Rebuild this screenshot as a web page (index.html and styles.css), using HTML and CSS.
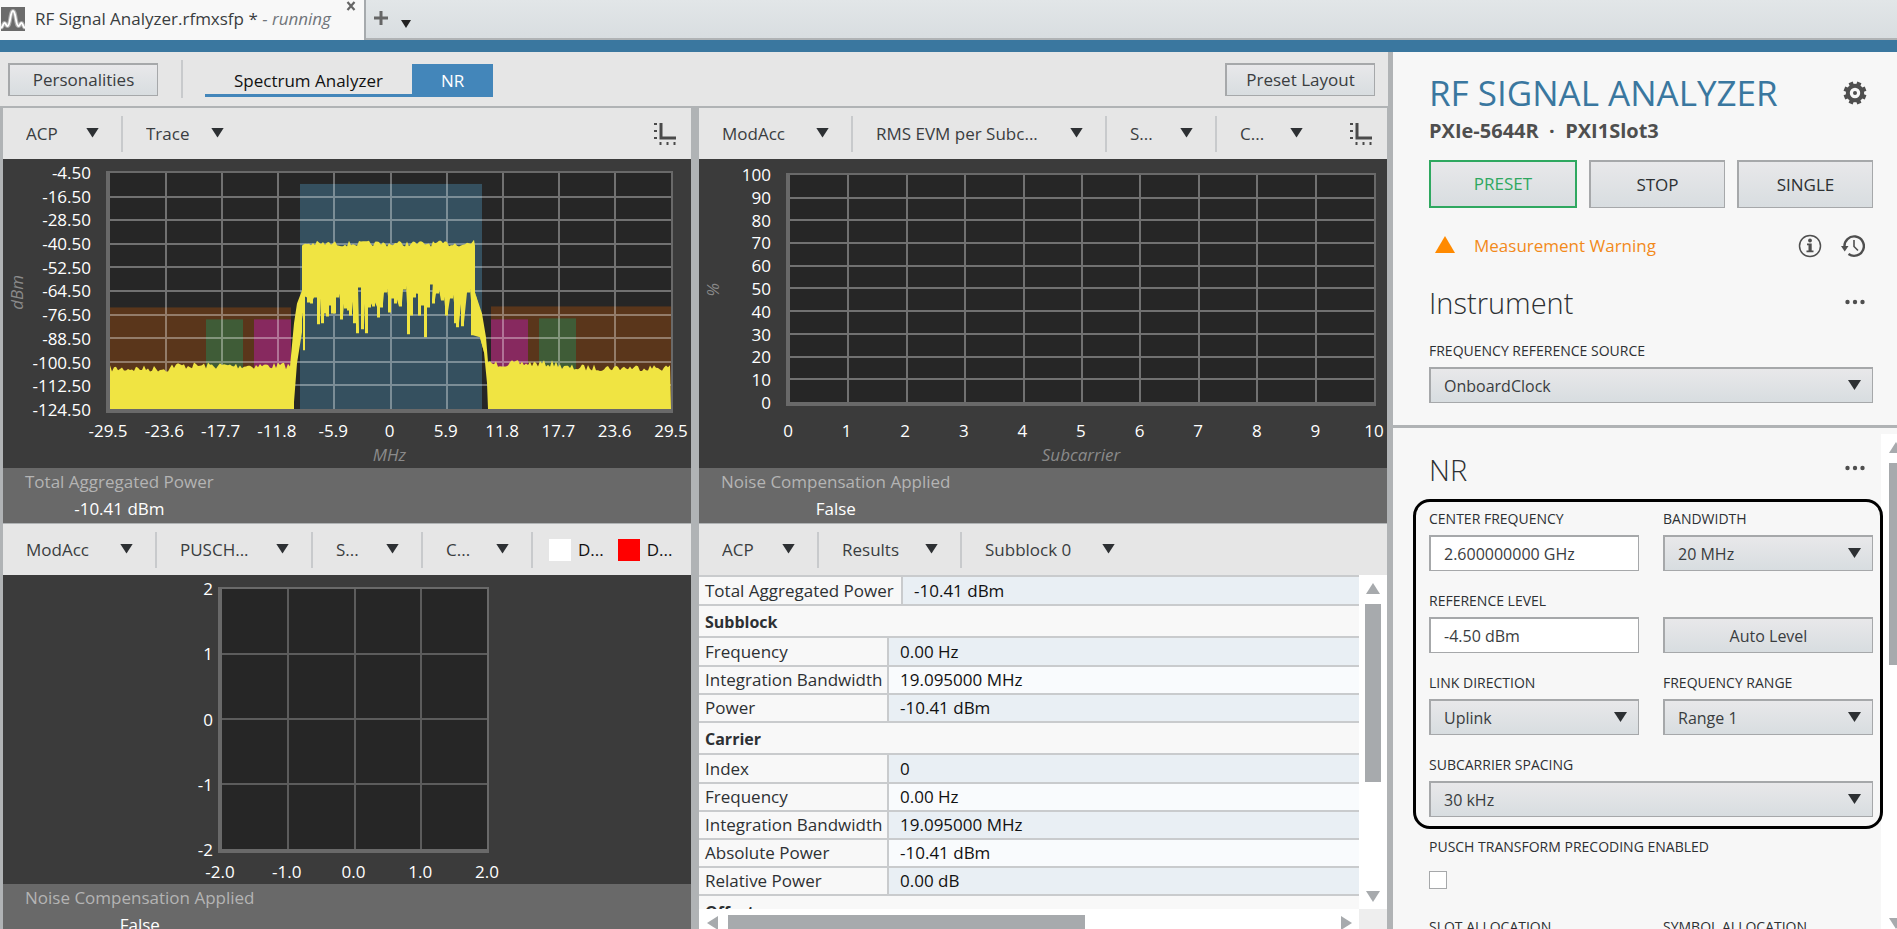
FILE: index.html
```html
<!DOCTYPE html>
<html lang="en">
<head>
<meta charset="utf-8">
<title>RF Signal Analyzer</title>
<link rel="stylesheet" href="styles.css">
</head>
<body>
<div class="app">
  <header class="tabbar">
    <div class="doc-tab">
      <svg class="doc-icon" viewBox="0 0 24 24" aria-hidden="true"><rect width="24" height="24" fill="#6b6b6b"/><path d="M0 21c2-1 2-5 3.500-5s1.500 3 3 3c3 0 2.500-15 5.500-15s2.500 15 5.500 15c1.500 0 1.500-3 3-3s1.500 4 3.500 5" fill="none" stroke="#aaa" stroke-width="4"/><path d="M0 21c2-1 2-5 3.500-5s1.500 3 3 3c3 0 2.500-15 5.500-15s2.500 15 5.500 15c1.500 0 1.500-3 3-3s1.500 4 3.500 5" fill="none" stroke="#fff" stroke-width="1.800"/></svg>
      <span class="doc-name">RF Signal Analyzer.rfmxsfp * <em>- running</em></span>
      <button class="doc-close" aria-label="Close tab"><svg viewBox="0 0 10 10"><path d="M1.500 1l7 8M8.500 1l-7 8" stroke="#666" stroke-width="2.200"/></svg></button>
    </div>
    <button class="tab-tool" aria-label="New tab"><svg width="16" height="16" viewBox="0 0 16 16"><path d="M8 1v14M1 8h14" stroke="#666" stroke-width="3"/></svg></button>
    <button class="tab-tool low" aria-label="Tab list"><svg width="10" height="8" viewBox="0 0 10 8"><path d="M0 0h10L5 8z" fill="#222"/></svg></button>
  </header>

  <div class="workspace">
    <main class="main">
      <div class="toolbar">
        <button class="btn btn-tool">Personalities</button>
        <span class="rule"></span>
        <nav class="modes">
          <button class="mode">Spectrum Analyzer</button>
          <button class="mode active">NR</button>
        </nav>
        <button class="btn btn-tool push">Preset Layout</button>
      </div>

      <div class="panels">
        <section class="panel">
          <div class="panel-head">
            <span class="pick w-acp"><select aria-label="Measurement"><option>ACP</option></select></span>
            <span class="pick w-trace"><select aria-label="View"><option>Trace</option></select></span>
            <button class="axes push" aria-label="Axes"><svg viewBox="0 0 24 24"><path d="M8 1v15h15" fill="none" stroke="#4a4a4a" stroke-width="3"/><path d="M1 2h3M1 9h3M1 16h3M7.500 20v3M14.500 20v3M21.500 20v3" stroke="#4a4a4a" stroke-width="2"/></svg></button>
          </div>
          <div class="chart chart-acp">
            <div class="ytitle">dBm</div>
            <div class="ylabels"><span>-4.50</span><span>-16.50</span><span>-28.50</span><span>-40.50</span><span>-52.50</span><span>-64.50</span><span>-76.50</span><span>-88.50</span><span>-100.50</span><span>-112.50</span><span>-124.50</span></div>
            <svg class="plot" id="acp-plot" viewBox="0 0 561 237" preserveAspectRatio="none" role="img" aria-label="ACP trace">
              <rect class="band-acp" x="190" y="11" width="182" height="226"/>
              <rect class="band-off" x="0" y="135" width="181" height="102"/>
              <rect class="band-off" x="381" y="134" width="180" height="103"/>
              <rect class="band-green" x="96" y="147" width="37" height="90"/>
              <rect class="band-pink" x="144" y="147" width="37" height="90"/>
              <rect class="band-pink" x="381" y="147" width="37" height="90"/>
              <rect class="band-green" x="429" y="146" width="37" height="91"/>
            </svg>
            <div class="xlabels"><span>-29.5</span><span>-23.6</span><span>-17.7</span><span>-11.8</span><span>-5.9</span><span>0</span><span>5.9</span><span>11.8</span><span>17.7</span><span>23.6</span><span>29.5</span></div>
            <div class="xtitle">MHz</div>
          </div>
          <div class="readout"><dl><dt>Total Aggregated Power</dt><dd>-10.41 dBm</dd></dl></div>
        </section>

        <section class="panel">
          <div class="panel-head">
            <span class="pick w-mod"><select aria-label="Measurement"><option>ModAcc</option></select></span>
            <span class="pick w-rms"><select aria-label="View"><option>RMS EVM per Subc...</option></select></span>
            <span class="pick w-short"><select aria-label="Subblock"><option>S...</option></select></span>
            <span class="pick w-short"><select aria-label="Carrier"><option>C...</option></select></span>
            <button class="axes push" aria-label="Axes"><svg viewBox="0 0 24 24"><path d="M8 1v15h15" fill="none" stroke="#4a4a4a" stroke-width="3"/><path d="M1 2h3M1 9h3M1 16h3M7.500 20v3M14.500 20v3M21.500 20v3" stroke="#4a4a4a" stroke-width="2"/></svg></button>
          </div>
          <div class="chart chart-evm">
            <div class="ytitle">%</div>
            <div class="ylabels"><span>100</span><span>90</span><span>80</span><span>70</span><span>60</span><span>50</span><span>40</span><span>30</span><span>20</span><span>10</span><span>0</span></div>
            <svg class="plot" id="evm-plot" viewBox="0 0 586 229" preserveAspectRatio="none" role="img" aria-label="RMS EVM per subcarrier"></svg>
            <div class="xlabels"><span>0</span><span>1</span><span>2</span><span>3</span><span>4</span><span>5</span><span>6</span><span>7</span><span>8</span><span>9</span><span>10</span></div>
            <div class="xtitle">Subcarrier</div>
          </div>
          <div class="readout"><dl><dt>Noise Compensation Applied</dt><dd>False</dd></dl></div>
        </section>

        <section class="panel">
          <div class="panel-head">
            <span class="pick w-mod"><select aria-label="Measurement"><option>ModAcc</option></select></span>
            <span class="pick w-pusch"><select aria-label="View"><option>PUSCH...</option></select></span>
            <span class="pick w-short"><select aria-label="Subblock"><option>S...</option></select></span>
            <span class="pick w-short"><select aria-label="Carrier"><option>C...</option></select></span>
            <ul class="legend"><li><i class="swatch white"></i>D...</li><li><i class="swatch red"></i>D...</li></ul>
          </div>
          <div class="chart chart-const">
            <div class="ytitle"></div>
            <div class="ylabels"><span>2</span><span>1</span><span>0</span><span>-1</span><span>-2</span></div>
            <svg class="plot" id="const-plot" viewBox="0 0 266 262" preserveAspectRatio="none" role="img" aria-label="PUSCH constellation"></svg>
            <div class="xlabels"><span>-2.0</span><span>-1.0</span><span>0.0</span><span>1.0</span><span>2.0</span></div>
          </div>
          <div class="readout"><dl><dt>Noise Compensation Applied</dt><dd>False</dd></dl></div>
        </section>

        <section class="panel results-panel">
          <div class="panel-head">
            <span class="pick w-acp"><select aria-label="Measurement"><option>ACP</option></select></span>
            <span class="pick w-results"><select aria-label="View"><option>Results</option></select></span>
            <span class="pick w-subblock"><select aria-label="Subblock"><option>Subblock 0</option></select></span>
          </div>
          <div class="results">
            <div class="sheet">
              <table class="total"><tr><th scope="row">Total Aggregated Power</th><td>-10.41 dBm</td></tr></table>
              <h3>Subblock</h3>
              <table>
                <tr><th scope="row">Frequency</th><td>0.00 Hz</td></tr>
                <tr><th scope="row">Integration Bandwidth</th><td>19.095000 MHz</td></tr>
                <tr><th scope="row">Power</th><td>-10.41 dBm</td></tr>
              </table>
              <h3>Carrier</h3>
              <table>
                <tr><th scope="row">Index</th><td>0</td></tr>
                <tr><th scope="row">Frequency</th><td>0.00 Hz</td></tr>
                <tr><th scope="row">Integration Bandwidth</th><td>19.095000 MHz</td></tr>
                <tr><th scope="row">Absolute Power</th><td>-10.41 dBm</td></tr>
                <tr><th scope="row">Relative Power</th><td>0.00 dB</td></tr>
              </table>
              <h3>Offset</h3>
            </div>
            <div class="vbar"><i class="tri up"></i><i class="thumb"></i><i class="tri down push-y"></i></div>
            <div class="hbar"><i class="tri left"></i><i class="thumb"></i><i class="tri right push"></i></div>
            <div class="corner"></div>
          </div>
        </section>
      </div>
    </main>

    <aside class="side">
      <div class="side-top">
        <div class="title-row">
          <h1>RF SIGNAL ANALYZER</h1>
          <button class="icon-btn gear" aria-label="Settings"><svg viewBox="0 0 24 24"><g transform="rotate(22.500 12 12)"><path d="M12 .5v23M.5 12h23M3.900 3.900l16.200 16.200M20.100 3.900L3.900 20.100" stroke="#4f4f4f" stroke-width="4.400"/></g><circle cx="12" cy="12" r="7.200" fill="#f7f7f7" stroke="#4f4f4f" stroke-width="4"/><circle cx="12" cy="12" r="2" fill="#4f4f4f"/></svg></button>
        </div>
        <p class="device">PXIe-5644R &nbsp;·&nbsp; PXI1Slot3</p>
        <div class="actions">
          <button class="btn preset">PRESET</button>
          <button class="btn">STOP</button>
          <button class="btn">SINGLE</button>
        </div>
        <div class="status">
          <svg class="warn" viewBox="0 0 20 17" aria-hidden="true"><path d="M10 0l10 17H0z" fill="#ff8a00"/></svg>
          <span class="status-text">Measurement Warning</span>
          <button class="icon-btn push" aria-label="Information"><svg viewBox="0 0 24 24"><circle cx="12" cy="12" r="10.500" fill="none" stroke="#4f4f4f" stroke-width="1.500"/><circle cx="12" cy="6.500" r="1.900" fill="#4f4f4f"/><path d="M9 9.500h4.700v7H15.500v1.800H8.500v-1.800h2v-5.200H9z" fill="#4f4f4f"/></svg></button>
          <button class="icon-btn" aria-label="History"><svg viewBox="0 0 24 24"><path d="M3.500 13a9.700 9.700 0 1 1 4 7" fill="none" stroke="#4f4f4f" stroke-width="2.400"/><path d="M0 12h7.500l-3.800 5.500z" fill="#4f4f4f"/><path d="M13 6v6.500l4 4" fill="none" stroke="#4f4f4f" stroke-width="1.600"/></svg></button>
        </div>
        <div class="head-row">
          <h2>Instrument</h2>
          <button class="icon-btn" aria-label="Instrument options"><svg viewBox="0 0 24 24"><g fill="#4f4f4f"><circle cx="4.500" cy="11" r="2.200"/><circle cx="12" cy="11" r="2.200"/><circle cx="19.500" cy="11" r="2.200"/></g></svg></button>
        </div>
        <div class="field">
          <label for="ref">FREQUENCY REFERENCE SOURCE</label>
          <span class="combo"><select id="ref"><option>OnboardClock</option></select></span>
        </div>
      </div>

      <div class="side-scroll">
        <div class="side-body">
          <div class="head-row">
            <h2>NR</h2>
            <button class="icon-btn" aria-label="NR options"><svg viewBox="0 0 24 24"><g fill="#4f4f4f"><circle cx="4.500" cy="10" r="2.200"/><circle cx="12" cy="10" r="2.200"/><circle cx="19.500" cy="10" r="2.200"/></g></svg></button>
          </div>
          <div class="marked">
            <div class="field"><label for="cf">CENTER FREQUENCY</label><input id="cf" type="text" value="2.600000000 GHz"></div>
            <div class="field"><label for="bw">BANDWIDTH</label><span class="combo"><select id="bw"><option>20 MHz</option></select></span></div>
            <div class="field"><label for="rl">REFERENCE LEVEL</label><input id="rl" type="text" value="-4.50 dBm"></div>
            <div class="field bottom"><button class="btn">Auto Level</button></div>
            <div class="field"><label for="ld">LINK DIRECTION</label><span class="combo"><select id="ld"><option>Uplink</option></select></span></div>
            <div class="field"><label for="fr">FREQUENCY RANGE</label><span class="combo"><select id="fr"><option>Range 1</option></select></span></div>
            <div class="field wide"><label for="scs">SUBCARRIER SPACING</label><span class="combo"><select id="scs"><option>30 kHz</option></select></span></div>
          </div>
          <div class="rest">
            <div class="field wide"><label for="tp">PUSCH TRANSFORM PRECODING ENABLED</label><input id="tp" type="checkbox"></div>
            <div class="field"><label for="slot">SLOT ALLOCATION</label><input id="slot" type="text"></div>
            <div class="field"><label for="sym">SYMBOL ALLOCATION</label><input id="sym" type="text"></div>
          </div>
        </div>
        <div class="vbar"><i class="tri up"></i><i class="thumb"></i><i class="tri down push-y"></i></div>
      </div>
    </aside>
  </div>
</div>
<script src="plots.js"></script>
</body>
</html>
```

FILE: plots.js
```js
const NS = 'http://www.w3.org/2000/svg';

function addPath(svg, cls, d) {
  const p = document.createElementNS(NS, 'path');
  p.setAttribute('class', cls);
  p.setAttribute('d', d);
  svg.appendChild(p);
}

function drawGrid(svg, cols, rows) {
  const { width: w, height: h } = svg.viewBox.baseVal;
  let d = '';
  for (let i = 1; i < cols; i++) d += `M${w * i / cols} 0V${h}`;
  for (let i = 1; i < rows; i++) d += `M0 ${h * i / rows}H${w}`;
  addPath(svg, 'grid', d);
}

// Small repeatable generator, so the noise is the same on every load.
let seed = 7;
function noise() {
  seed = (seed * 16807) % 2147483647;
  return seed / 2147483647;
}

function floorTop(from, to, level) {
  let d = '';
  for (let x = from; x <= to; x += 2) d += `L${x} ${level - 3 + noise() * 7}`;
  return d;
}

// Lowest points of the in-band trace: [x, y].
const troughs = [[198,130],[201,131],[205,125],[208,152],[212,151],[215,141],[217,144],[220,133],
  [222,141],[224,141],[227,125],[231,147],[235,136],[238,138],[240,143],[244,151],[247,161],[249,115],
  [252,157],[256,161],[259,135],[263,134],[268,145],[271,135],[275,120],[279,140],[282,126],[285,131],
  [290,134],[294,117],[298,162],[301,143],[304,125],[309,143],[312,133],[315,165],[318,135],[321,112],
  [323,131],[327,121],[332,128],[336,143],[341,126],[345,151],[347,155],[352,154],[358,120],[362,163]];

function drawSpectrum(svg) {
  addPath(svg, 'trace', 'M0 237' + floorTop(0, 60, 196) + floorTop(62, 181, 193) +
    'L184 151L187 131L192 118V160L187 191L184 230V237Z');
  addPath(svg, 'trace', 'M378 237L377 211L374 180L370 165L365 120L372 141L376 165L378 190' +
    floorTop(380, 450, 191) + floorTop(452, 561, 195) + 'L561 237Z');

  let d = 'M192 118V73';
  for (let x = 193; x <= 362; x += 2) d += `L${x} ${68 + noise() * 6}`;
  d += 'L364 67L365 73V120L372 145L374 180L370 165L363 163';
  for (const [x, y] of [...troughs].reverse()) {
    d += `L${x + 2} ${y - 4}V${y}H${x - 1}V${Math.min(y, 120 + noise() * 16)}`;
  }
  d += 'L195 124V178H193V140L190 160Z';
  addPath(svg, 'trace', d);
}

const acp = document.getElementById('acp-plot');
drawGrid(acp, 10, 10);
drawSpectrum(acp);
drawGrid(document.getElementById('evm-plot'), 10, 10);
drawGrid(document.getElementById('const-plot'), 4, 4);
```

FILE: styles.css
```css
* { box-sizing: border-box; }
html, body { height: 100%; margin: 0; overflow: hidden; }
body { font: 17px/24px "Open Sans", "Noto Sans", sans-serif; color: #3a3d3f; background: #e6e6e6; }
button, select, input { font: inherit; color: inherit; margin: 0; }
button { cursor: pointer; }
h1, h2, h3, p, dl, dd, ul { margin: 0; padding: 0; }
svg { display: block; }
.push { margin-left: auto; }
.push-y { margin-top: auto; }

.app { display: flex; flex-direction: column; height: 100vh; }
.tabbar { display: flex; height: 52px; flex: none; border-bottom: 12px solid #3a779f; background: linear-gradient(#e2e6e8, #d8dde0); box-shadow: inset 0 -2px #b0b3b5; }
.doc-tab { display: flex; align-items: center; width: 366px; padding: 0 8px 3px 1px; background: #f8f8f8; border-right: 2px solid #a6aaad; }
.doc-icon { width: 24px; height: 24px; flex: none; }
.doc-name { margin-left: 10px; white-space: nowrap; }
.doc-name em { color: #70757a; }
.doc-close { align-self: flex-start; margin-left: auto; padding: 1px 0; border: 0; background: none; }
.doc-close svg { width: 10px; height: 10px; }
.tab-tool { display: flex; align-items: center; padding: 0 0 5px 7px; border: 0; background: none; }
.tab-tool.low { padding: 8px 0 0 12px; }

.workspace { display: flex; flex: 1; min-height: 0; }
.main { display: flex; flex-direction: column; flex: 1; min-width: 0; }
.toolbar { display: flex; align-items: center; height: 54px; flex: none; padding: 0 13px 0 8px; }
.btn { border: 2px solid #a6a8aa; border-width: 2px 1px 1px 2px; background: linear-gradient(#e8e8ea, #d8dde0); padding: 0; }
.btn-tool { width: 150px; height: 33px; }
.rule { width: 2px; height: 38px; margin: 0 22px 0 23px; background: #c8cacc; }
.modes { display: flex; margin-top: 2px; }
.mode { height: 33px; border: 0; border-bottom: 3px solid #4386ba; padding: 4px 29px 0; background: none; color: #111; line-height: 26px; }
.mode.active { background: #4386ba; color: #fff; }

.panels { display: grid; grid-template-columns: 1fr 1fr; grid-auto-rows: 413px; gap: 3px 8px; flex: 1; min-height: 0; overflow: hidden; padding: 2px 1px 0 3px; background: #b0b3b5; }
.panel { min-width: 0; display: flex; flex-direction: column; background: #3b3b3b; }
.panel-head { display: flex; align-items: center; height: 51px; flex: none; padding-right: 14px; background: #e6e6e6; }
.pick { position: relative; height: 36px; border-right: 2px solid #c8cacc; }
.pick:last-of-type { border-right-color: transparent; }
.pick:has(+ .legend) { border-right-color: #c8cacc; }
.pick select, .combo select { appearance: none; width: 100%; height: 100%; border: 0; background: none; padding: 0 0 0 23px; }
.pick::after, .combo::after { content: ""; position: absolute; right: 22px; top: 12px; width: 13px; height: 10px; background: #2d3033; clip-path: polygon(0 0, 100% 0, 50% 100%); pointer-events: none; }
.w-acp { width: 120px; }
.w-trace { width: 125px; }
.w-mod { width: 154px; }
.w-rms { width: 254px; }
.w-short { width: 110px; }
.w-pusch { width: 156px; }
.w-results { width: 143px; }
.w-subblock { width: 177px; }
.axes { padding: 0; border: 0; background: none; }
.axes svg { width: 24px; height: 24px; }
.legend { display: flex; gap: 14px; padding-left: 16px; list-style: none; color: #111; }
.legend li { display: flex; align-items: center; gap: 7px; }
.swatch { width: 22px; height: 22px; }
.white { background: #fff; }
.red { background: #f00; }

.chart { display: grid; flex: none; height: 309px; color: #fff; }
.chart-acp { grid-template: 242px 30px 25px / 28px 59px 1fr; padding: 12px 18px 0 0; column-gap: 8px; }
.chart-evm { grid-template: 233px 37px 25px / 28px 43px 1fr; padding: 14px 11px 0 0; column-gap: 8px; }
.chart-const { grid-template: 266px 31px / 152px 53px 271px; padding: 12px 0 0 0; column-gap: 5px; }
.ytitle { writing-mode: sideways-lr; text-align: center; justify-self: center; color: #8a8a8a; font-style: italic; line-height: 28px; }
.ylabels { display: flex; flex-direction: column; justify-content: space-between; align-items: flex-end; padding: 2px 0 3px; }
.chart-acp .ylabels, .chart-evm .ylabels { padding-right: 7px; }
.ylabels span { display: flex; align-items: center; height: 0; }
.plot { width: 100%; height: 100%; min-width: 0; border: 2px solid #696969; border-width: 2px 2px 4px 4px; background: #262626; }
.xlabels { grid-column: 3; display: flex; justify-content: space-between; align-items: flex-end; padding: 0 2px; }
.xlabels span { display: flex; justify-content: center; width: 0; white-space: nowrap; }
.xtitle { grid-column: 3; text-align: center; color: #8a8a8a; font-style: italic; }
.grid { fill: none; stroke: #fff; stroke-opacity: .35; stroke-width: 2; vector-effect: non-scaling-stroke; shape-rendering: crispEdges; }
#const-plot .grid { stroke-opacity: .25; }
.trace { fill: #f0e442; }
.band-acp { fill: #35505f; }
.band-off { fill: #5a361b; }
.band-green { fill: #3f5c37; }
.band-pink { fill: #87295f; }
.readout { display: flex; flex: 1; padding: 2px 22px; background: #696969; color: #fff; }
.readout dt { color: #b4b4b4; }
.readout dd { margin-top: 3px; text-align: center; }

.results { display: grid; grid-template: 334px 28px / 1fr 28px; flex: 1; background: #fff; color: #2d3033; }
.sheet { overflow: hidden; background: #f8f8f8; border-top: 2px solid #c9cbcd; }
.sheet table { width: 100%; border-collapse: collapse; table-layout: fixed; }
.sheet th { width: 189px; height: 28px; padding: 0 0 0 6px; text-align: left; font-weight: 400; white-space: nowrap; border-bottom: 2px solid #c9cbcd; border-right: 2px solid #c9cbcd; line-height: 24px; }
.sheet .total th { width: 203px; }
.sheet td { padding: 0 11px; border-bottom: 2px solid #c9cbcd; background: #e9eff4; color: #111; line-height: 24px; }
.sheet tr:nth-child(even) td { background: #f9fbfd; }
.sheet h3 { height: 32px; padding: 0 6px; border-bottom: 2px solid #c9cbcd; font-size: 16px; line-height: 32px; }
.vbar { display: flex; flex-direction: column; align-items: center; background: #fff; }
.hbar { display: flex; align-items: center; padding: 0 7px 0 8px; background: #fff; }
.corner { background: #eee; }
.tri { width: 14px; height: 11px; background: #a7aaad; flex: none; }
.up { clip-path: polygon(50% 0, 100% 100%, 0 100%); }
.down { clip-path: polygon(0 0, 100% 0, 50% 100%); }
.left, .right { width: 11px; height: 14px; }
.left { clip-path: polygon(0 50%, 100% 0, 100% 100%); }
.right { clip-path: polygon(0 0, 100% 50%, 0 100%); }
.results .vbar { padding: 8px 0 7px; }
.results .vbar .thumb { width: 16px; height: 178px; margin-top: 10px; background: #a7aaad; }
.hbar .thumb { width: 357px; height: 16px; margin-left: 10px; background: #a7aaad; }

.side { display: flex; flex-direction: column; width: 509px; flex: none; border-left: 5px solid #b0b3b5; background: #f7f7f7; font-size: 16px; }
.side-top { flex: none; padding: 15px 24px 22px 36px; border-bottom: 3px solid #b0b3b5; }
.title-row, .head-row, .status { display: flex; align-items: center; }
h1 { font-size: 35px; line-height: 52px; font-weight: 400; color: #3a779f; white-space: nowrap; }
h2 { font-size: 29px; line-height: 40px; font-weight: 300; color: #2d3033; }
.title-row, .head-row { justify-content: space-between; padding-right: 6px; }
.device { font-size: 20px; line-height: 24px; font-weight: 700; color: #4f4f4f; }
.actions { display: grid; grid-template-columns: 148fr 136fr 136fr; gap: 12px; margin-top: 17px; }
.actions .btn { height: 48px; color: #2d3033; font-size: 17px; }
.actions .preset { border: 2px solid #2fa860; color: #2fa860; }
.status { margin-top: 26px; gap: 19px; padding: 0 8px 0 6px; }
.warn { width: 20px; height: 17px; margin-bottom: 4px; }
.status-text { color: #f28a1b; font-size: 17px; }
.icon-btn { padding: 0; border: 0; background: none; }
.icon-btn svg { width: 24px; height: 24px; }
.side-top .head-row { margin-top: 25px; }
.side-top .field { margin-top: 18px; }
.field { display: flex; flex-direction: column; }
.field label { font-size: 14px; line-height: 20px; margin-bottom: 6px; color: #2d3033; white-space: nowrap; }
.field input[type="text"], .combo { width: 100%; height: 36px; border: 2px solid #a6a8aa; border-width: 2px 1px 1px 2px; }
.field input[type="text"] { padding: 0 13px; background: #fff; }
.combo { position: relative; display: block; background: linear-gradient(#e8e8ea, #d8dde0); }
.combo select { padding-left: 13px; }
.combo::after { right: 11px; top: 11px; }
.field .btn { height: 36px; }
.bottom { justify-content: flex-end; }
.wide { grid-column: 1 / -1; }
.side-scroll { display: flex; flex: 1; min-height: 0; overflow: hidden; }
.side-body { flex: 1; padding: 22px 0 0 20px; }
.side-body .head-row { padding: 0 14px 0 16px; }
.marked, .rest { display: grid; grid-template-columns: 1fr 1fr; gap: 20px 24px; }
.marked { margin: 9px -2px 0 0; padding: 7px 7px 9px 13px; border: 3px solid #000; border-radius: 17px; position: relative; }
.rest { padding: 8px 8px 0 16px; }
.field input[type="checkbox"] { appearance: none; width: 18px; height: 18px; margin: 8px 0 8px; border: 1px solid #a6a8aa; background: #fff; }
.side-scroll .vbar { width: 16px; margin-top: 6px; padding: 8px 0 0 8px; align-items: flex-start; overflow: hidden; }
.side-scroll .vbar .thumb { width: 16px; height: 202px; margin-top: 10px; background: #a7aaad; flex: none; }
```
